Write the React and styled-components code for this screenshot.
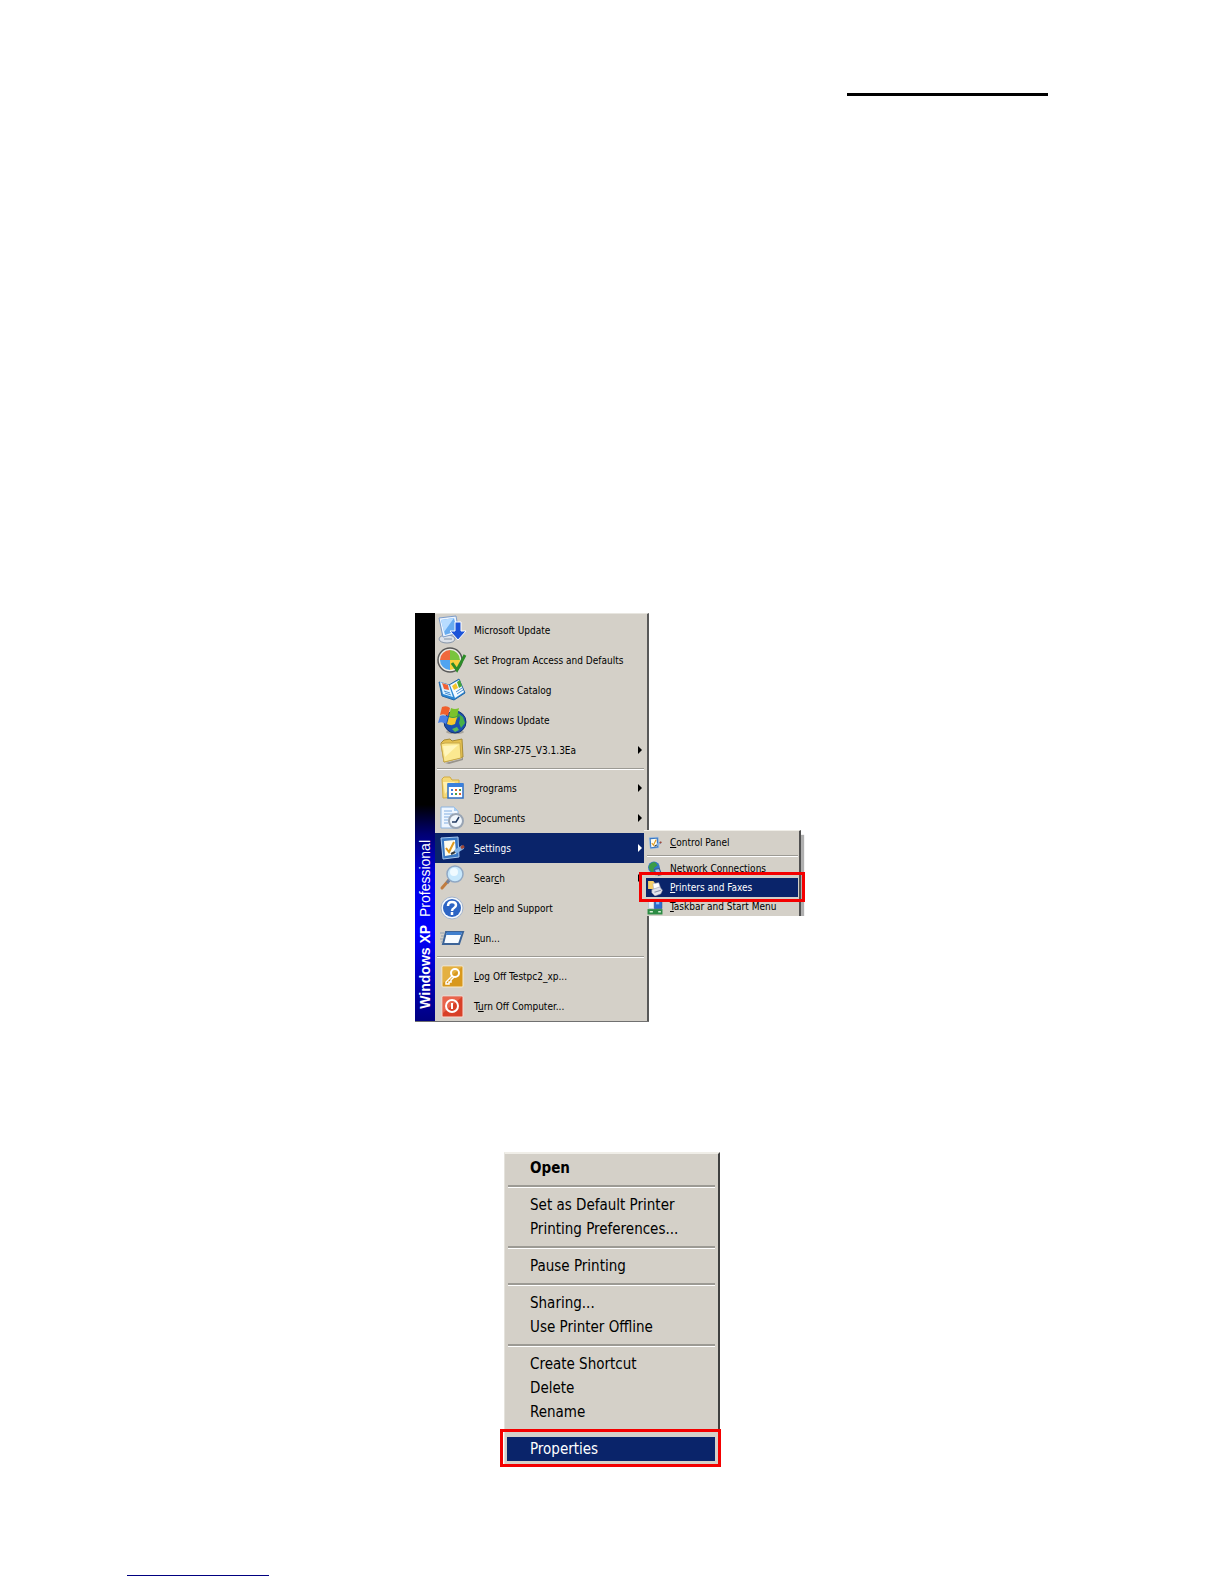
import React from "react"
import styled, { createGlobalStyle, css } from "styled-components"

const GlobalStyle = createGlobalStyle`
  *,
  *::before,
  *::after {
    box-sizing: border-box;
  }
  body {
    margin: 0;
    background: #fff;
  }
`

const theme = {
  face: "#d4d0c8",
  navy: "#0a246a",
  red: "#f40000",
  ui: '"DejaVu Sans Condensed", "DejaVu Sans", sans-serif',
}

const Page = styled.div`
  display: flex;
  flex-direction: column;
  min-height: 100vh;
  font-family: ${theme.ui};
  color: #000;
`

const Header = styled.header`
  display: flex;
  justify-content: flex-end;
  padding: 93px 176px 0 0;
`

const HeaderRule = styled.hr`
  width: 201px;
  height: 3px;
  margin: 0;
  border: 0;
  background: #000;
`

const Figures = styled.main`
  flex: 1;
  display: flex;
  flex-direction: column;
  align-items: center;
  gap: 130px;
  padding: 517px 4px 0 0;
`

const Footer = styled.footer`
  padding: 0 0 8px 127px;
`

const FooterRule = styled.hr`
  width: 142px;
  height: 1px;
  margin: 0;
  border: 0;
  background: #000080;
`

const List = styled.ul`
  list-style: none;
  margin: 0;
  padding: 0;
`

const StartFigure = styled.section`
  width: 390px;
  display: flex;
`

const StartMenu = styled.nav`
  width: 234px;
  display: flex;
  border-bottom: 1px solid #707070;
`

const Banner = styled.div`
  width: 20px;
  display: flex;
  align-items: center;
  padding-bottom: 12px;
  writing-mode: vertical-rl;
  background: linear-gradient(
    #000 47%,
    #000070 54%,
    #0000e0 64%,
    #00f 78%,
    #000080
  );
`

const BannerText = styled.span`
  margin-top: auto;
  transform: rotate(180deg);
  font: 14px/20px "Liberation Sans", Arial, sans-serif;
  color: #fff;
  white-space: pre;
`

const StartBody = styled(List)`
  flex: 1;
  padding: 1px 3px 0 0;
  background: ${theme.face};
  border-top: 1px solid #e8e6e0;
  border-right: 2px solid #585858;
`

const Row = styled.li`
  position: relative;
`

const Separator = styled.li`
  height: ${props => props.$height}px;
  padding: ${props => props.$top}px 0 0 ${props => props.$inset}px;
  &::before {
    content: "";
    display: block;
    border-top: ${props => props.$line ?? 1}px solid #9c9a94;
    border-bottom: 1px solid #fff;
  }
`

const Item = styled.button`
  display: flex;
  align-items: center;
  width: 100%;
  border: 0;
  margin: 0;
  background: transparent;
  color: inherit;
  font-family: inherit;
  text-align: left;
  white-space: nowrap;
  ${props =>
    props.$active &&
    css`
      background: ${theme.navy};
      color: #fff;
    `}
`

const StartItem = styled(Item)`
  height: 30px;
  padding: 0 2px;
  gap: 7px;
  font-size: 10px;
`

const Label = styled.span`
  flex: 1;
`

const Arrow = styled.span`
  width: 0;
  height: 0;
  border: 4px solid transparent;
  border-left-color: currentColor;
  border-right-width: 0;
`

const SubMenu = styled(List)`
  position: absolute;
  z-index: 1;
  top: -3px;
  left: 100%;
  width: 157px;
  padding: 2px 1px 0 2px;
  background: ${theme.face};
  border-top: 1px solid #f0eee8;
  border-right: 2px solid #505050;
  box-shadow: 4px 4px 1px -1px #b0b0b0;
  clip-path: inset(0 -8px 0 -8px);
  color: #000;
`

const SubItem = styled(Item)`
  height: 19px;
  padding: 0 1px;
  gap: 7px;
  font-size: 10px;
`

const frame = css`
  position: relative;
  &::after {
    content: "";
    position: absolute;
    z-index: 2;
    border: 3px solid ${theme.red};
    pointer-events: none;
  }
`

const FramedRow = styled.li`
  ${frame}
  &::after {
    inset: -6px -7px -5px;
  }
`

const PrinterFigure = styled.section`
  width: 222px;
  padding: 0 1px 0 5px;
`

const ContextMenu = styled(List)`
  padding: 2px 3px 3px 2px;
  background: ${theme.face};
  border-top: 2px solid #f0eee8;
  border-left: 1px solid #e4e2dc;
  border-right: 2px solid #404040;
`

const ContextItem = styled(Item)`
  height: 24px;
  padding: 0 23px;
  font-size: 15px;
  font-weight: ${props => (props.$bold ? 700 : 400)};
`

const FramedContextRow = styled.li`
  ${frame}
  &::after {
    inset: -8px -6px -6px -7px;
  }
`

const Icon = ({ size = 30, children }) => (
  <svg width={size} height={size} viewBox="0 0 30 30" aria-hidden="true">
    {children}
  </svg>
)

const Flag = () => (
  <>
    <path d="M5 2q5-2 8 1l-2 8q-4-3-8-1z" fill="#f0602c" />
    <path d="M14 3q4 2 8 0l-2 8q-4 2-8 0z" fill="#7cc22c" />
    <path d="M3 11q4-2 8 1l-2 7q-4-3-8-1z" fill="#4a80e4" />
    <path d="M12 12q4 2 8 0l-2 7q-4 2-8 0z" fill="#f8c82c" />
  </>
)

const Clipboard = () => (
  <>
    <path d="M4 5l17-1 1 20-16 2z" fill="#3a78c4" stroke="#a4c8f0" />
    <path d="M7 8l11-1 1 14-11 2z" fill="#fffdf0" />
    <path d="M9 15l3 4 5-10" fill="none" stroke="#e0981c" strokeWidth="2" />
    <path d="M14 21l6-3" stroke="#303840" strokeWidth="2" />
    <path d="M18 19l8-5" stroke="#84b4e8" strokeWidth="4" />
    <path d="M24 15l3-2" stroke="#a04838" strokeWidth="3" />
  </>
)

const Globe = () => (
  <>
    <ellipse cx="18" cy="27" rx="9" ry="2" fill="#a8a49c" />
    <circle cx="18" cy="17" r="11" fill="#1c50b0" stroke="#123474" />
    <path d="M12 11q4-5 8-4l3 3-4 5-3 1-1 5q-5-4-3-10z" fill="#3ca048" />
    <path d="M22 9l4 3 2 6-4 5-2-5 1-4z" fill="#48b048" />
    <path d="M15 24l5-2 2 3-4 2z" fill="#58b858" />
  </>
)

const icons = {
  update: (
    <>
      <ellipse cx="10" cy="24" rx="8" ry="4" fill="#dce2ea" stroke="#8494a8" />
      <path d="M2 3l17-2 3 17-16 4z" fill="#eef5ff" stroke="#7d9cc8" />
      <path d="M4 5l13-2 3 13-12 4z" fill="#68acf0" />
      <path d="M4 5l13-2-10 14z" fill="#b8dcff" />
      <path d="M7 24h8" stroke="#8494a8" />
      <path d="M18 7h6v9h5l-8 9-8-9h5z" fill="#1c54d8" stroke="#fff" />
    </>
  ),
  access: (
    <>
      <circle cx="13" cy="15" r="12" fill="#ecebe6" stroke="#585858" strokeWidth="1.5" />
      <path d="M13 15V5a10 10 0 0 0-10 10z" fill="#f0683c" />
      <path d="M13 15V5a10 10 0 0 1 10 10z" fill="#78c43c" />
      <path d="M13 15v10a10 10 0 0 1-10-10z" fill="#50a4f0" />
      <path d="M13 15v10a10 10 0 0 0 10-10z" fill="#f8d03c" />
      <path d="M15 18l5 7 8-15" fill="none" stroke="#2c8c28" strokeWidth="3" />
    </>
  ),
  catalog: (
    <>
      <path d="M2 7l10 3 10-6 6 14-11 7-12-4z" fill="#2c88d4" stroke="#2468a8" />
      <path d="M3 7l9 3 4 12-10-3z" fill="#d8f0ff" />
      <path d="M13 10l9-5 5 12-9 6z" fill="#f4faff" />
      <path d="M5 8l6 2 1 5-5-1z" fill="#f06034" />
      <path d="M15 11l4-3 2 5-4 2z" fill="#f4c42c" />
      <path d="M20 7l3-2 2 6-3 2z" fill="#48a43c" />
      <path d="M7 16l6 2M8 18l6 2M19 17l6-4M20 19l6-4" stroke="#4b93d4" />
    </>
  ),
  windows: (
    <>
      <Globe />
      <Flag />
    </>
  ),
  folder: (
    <>
      <path d="M8 28l16-4 2-2v3l-14 4z" fill="#98948c" />
      <path d="M4 8l3-3 6-1 2 2 10-2 1 18-19 5z" fill="#e4c050" stroke="#a88c34" />
      <path d="M4 9l4-1 15 0 1 15-17 4z" fill="#fbe890" stroke="#c8a848" />
      <path d="M6 11l15-1-13 12z" fill="#fff6bc" />
    </>
  ),
  programs: (
    <>
      <path d="M5 6l2-2h6l2 3h7v17l-16 1z" fill="#f5d978" stroke="#d2ab40" />
      <path d="M6 9h12l-10 12z" fill="#fff0b0" />
      <path d="M11 11h15v14H11z" fill="#fff" stroke="#2e6fc4" strokeWidth="1.5" />
      <path d="M11 10h15v4H11z" fill="#3a80dc" />
      <path d="M14 17h2M14 21h2" stroke="#3a80dc" strokeWidth="2" />
      <path d="M18 17h2M22 21h2" stroke="#e06030" strokeWidth="2" />
      <path d="M22 17h2M18 21h2" stroke="#48a048" strokeWidth="2" />
    </>
  ),
  documents: (
    <>
      <path d="M4 4h13l4 4v17H4z" fill="#eef6ff" stroke="#8cb4e0" />
      <path d="M17 4v4h4z" fill="#a8ccf0" />
      <path d="M7 8h8M7 11h9M7 14h6M7 17h4M7 20h4" stroke="#82aee0" />
      <circle cx="19" cy="18" r="7" fill="#f0f6fc" stroke="#98a4b4" strokeWidth="2" />
      <path d="M22 14l-3 5h-4" fill="none" stroke="#223a60" strokeWidth="1.5" />
    </>
  ),
  settings: <Clipboard />,
  search: (
    <>
      <path d="M12 17l-7 8" stroke="#c07c40" strokeWidth="3" strokeLinecap="round" />
      <path d="M13 16l-3 4" stroke="#70809c" strokeWidth="3" />
      <circle cx="18" cy="11" r="8" fill="#c8e8fc" stroke="#90a8c4" strokeWidth="1.5" />
      <circle cx="17" cy="9" r="4" fill="#f0faff" />
    </>
  ),
  help: (
    <>
      <circle cx="15" cy="15" r="11" fill="#f4f8fc" stroke="#a4b4cc" />
      <circle cx="15" cy="15" r="9" fill="#2c64c4" />
      <path
        d="M11 13q0-4 4-4t4 3q0 2-2 3t-2 3M15 19v3"
        fill="none"
        stroke="#fff"
        strokeWidth="2.5"
      />
    </>
  ),
  run: (
    <>
      <path d="M9 9h17l-4 12H6z" fill="#f8fcff" stroke="#3c6498" strokeWidth="2" />
      <path d="M10 9h15l-1 3H9z" fill="#3f7fce" />
      <path d="M3 10h4M4 13h3M3 16h3M4 19h2" stroke="#90a0b0" />
    </>
  ),
  logoff: (
    <>
      <rect x="5" y="5" width="21" height="21" rx="1" fill="#d8981c" stroke="#f8ecd0" />
      <path d="M6 6h19L6 22z" fill="#e4b040" />
      <circle cx="18" cy="12" r="4" fill="none" stroke="#fff" strokeWidth="2" />
      <path d="M15 15l-6 6v2h3v-2h2v-2l3-3" fill="none" stroke="#fff" strokeWidth="1.5" />
    </>
  ),
  turnoff: (
    <>
      <rect x="5" y="5" width="21" height="21" rx="1" fill="#d84028" stroke="#f8dcd4" />
      <path d="M6 6h19L6 22z" fill="#e8644c" />
      <circle cx="15" cy="15" r="6" fill="none" stroke="#fff" strokeWidth="2" />
      <path d="M15 12v6" stroke="#fff" strokeWidth="2" />
    </>
  ),
  network: (
    <>
      <circle cx="13" cy="12" r="11" fill="#2f74c8" />
      <path d="M3 10q4-8 12-8l5 6-7 5-1 9q-9-3-9-12z" fill="#3c9c48" />
      <path d="M14 16l9-2 3 8-9 4z" fill="#9cc8f0" stroke="#3c5c8c" strokeWidth="2" />
      <path d="M20 27l8-2" stroke="#5c6c80" strokeWidth="3" />
    </>
  ),
  printers: (
    <>
      <path d="M2 2h10l3 4v11H2z" fill="#f5cf68" />
      <path d="M11 7l11-2 3 9-12 5z" fill="#fff" stroke="#aab" />
      <path d="M9 18l15-5 5 6-3 7-11 4-6-6z" fill="#e4e4ec" stroke="#9090a0" />
      <path d="M14 23l12-4" stroke="#8890a8" strokeWidth="2" />
    </>
  ),
  taskbar: (
    <>
      <path d="M1 19h28v10H1z" fill="#2c8c44" />
      <path d="M3 4h10v14H3z" fill="#eef4fa" stroke="#98b0c8" />
      <path d="M14 1h14v17H14z" fill="#2c6cd0" stroke="#1c4890" />
      <path d="M17 4h6v6h-6z" fill="#8cc4f8" />
      <path d="M5 24h6M21 24h5" stroke="#d8f0d8" strokeWidth="3" />
    </>
  ),
}

const startItems = [
  { icon: "update", text: "Microsoft Update" },
  { icon: "access", text: "Set Program Access and Defaults" },
  { icon: "catalog", text: "Windows Catalog" },
  { icon: "windows", text: "Windows Update" },
  { icon: "folder", text: "Win SRP-275_V3.1.3Ea", more: true },
  null,
  { icon: "programs", text: "Programs", hot: 0, more: true },
  { icon: "documents", text: "Documents", hot: 0, more: true },
  { icon: "settings", text: "Settings", hot: 0, more: true, open: true },
  { icon: "search", text: "Search", hot: 4, more: true },
  { icon: "help", text: "Help and Support", hot: 0 },
  { icon: "run", text: "Run...", hot: 0 },
  null,
  { icon: "logoff", text: "Log Off Testpc2_xp...", hot: 0 },
  { icon: "turnoff", text: "Turn Off Computer...", hot: 1 },
]

const settingsItems = [
  { icon: "settings", text: "Control Panel", hot: 0 },
  null,
  { icon: "network", text: "Network Connections", hot: 0 },
  { icon: "printers", text: "Printers and Faxes", hot: 0, active: true },
  { icon: "taskbar", text: "Taskbar and Start Menu", hot: 0 },
]

const printerItems = [
  { text: "Open", bold: true },
  null,
  { text: "Set as Default Printer" },
  { text: "Printing Preferences..." },
  null,
  { text: "Pause Printing" },
  null,
  { text: "Sharing..." },
  { text: "Use Printer Offline" },
  null,
  { text: "Create Shortcut" },
  { text: "Delete" },
  { text: "Rename" },
  null,
  { text: "Properties", active: true },
]

// underlines the access key of a menu label
const HotLabel = ({ text, hot }) =>
  hot === undefined ? (
    <Label>{text}</Label>
  ) : (
    <Label>
      {text.slice(0, hot)}
      <u>{text[hot]}</u>
      {text.slice(hot + 1)}
    </Label>
  )

const SettingsMenu = () => (
  <SubMenu>
    {settingsItems.map((item, index) => {
      if (!item) {
        return <Separator key={index} $height={7} $top={3} $inset={1} />
      }
      const Wrap = item.active ? FramedRow : Row
      return (
        <Wrap key={index}>
          <SubItem type="button" $active={item.active}>
            <Icon size={16}>{icons[item.icon]}</Icon>
            <HotLabel text={item.text} hot={item.hot} />
          </SubItem>
        </Wrap>
      )
    })}
  </SubMenu>
)

const App = () => (
  <Page>
    <GlobalStyle />
    <Header>
      <HeaderRule />
    </Header>
    <Figures>
      <StartFigure>
        <StartMenu aria-label="Start menu">
          <Banner>
            <BannerText>
              <b>Windows XP</b>
              {"  Professional"}
            </BannerText>
          </Banner>
          <StartBody>
            {startItems.map((item, index) =>
              item ? (
                <Row key={index}>
                  <StartItem type="button" $active={item.open}>
                    <Icon>{icons[item.icon]}</Icon>
                    <HotLabel text={item.text} hot={item.hot} />
                    {item.more && <Arrow />}
                  </StartItem>
                  {item.open && <SettingsMenu />}
                </Row>
              ) : (
                <Separator key={index} $height={8} $top={3} $inset={2} />
              ),
            )}
          </StartBody>
        </StartMenu>
      </StartFigure>
      <PrinterFigure>
        <ContextMenu>
          {printerItems.map((item, index) => {
            if (!item) {
              return (
                <Separator
                  key={index}
                  $height={13}
                  $top={5}
                  $inset={1}
                  $line={2}
                />
              )
            }
            const Wrap = item.active ? FramedContextRow : Row
            return (
              <Wrap key={index}>
                <ContextItem
                  type="button"
                  $bold={item.bold}
                  $active={item.active}
                >
                  {item.text}
                </ContextItem>
              </Wrap>
            )
          })}
        </ContextMenu>
      </PrinterFigure>
    </Figures>
    <Footer>
      <FooterRule />
    </Footer>
  </Page>
)

export default App
